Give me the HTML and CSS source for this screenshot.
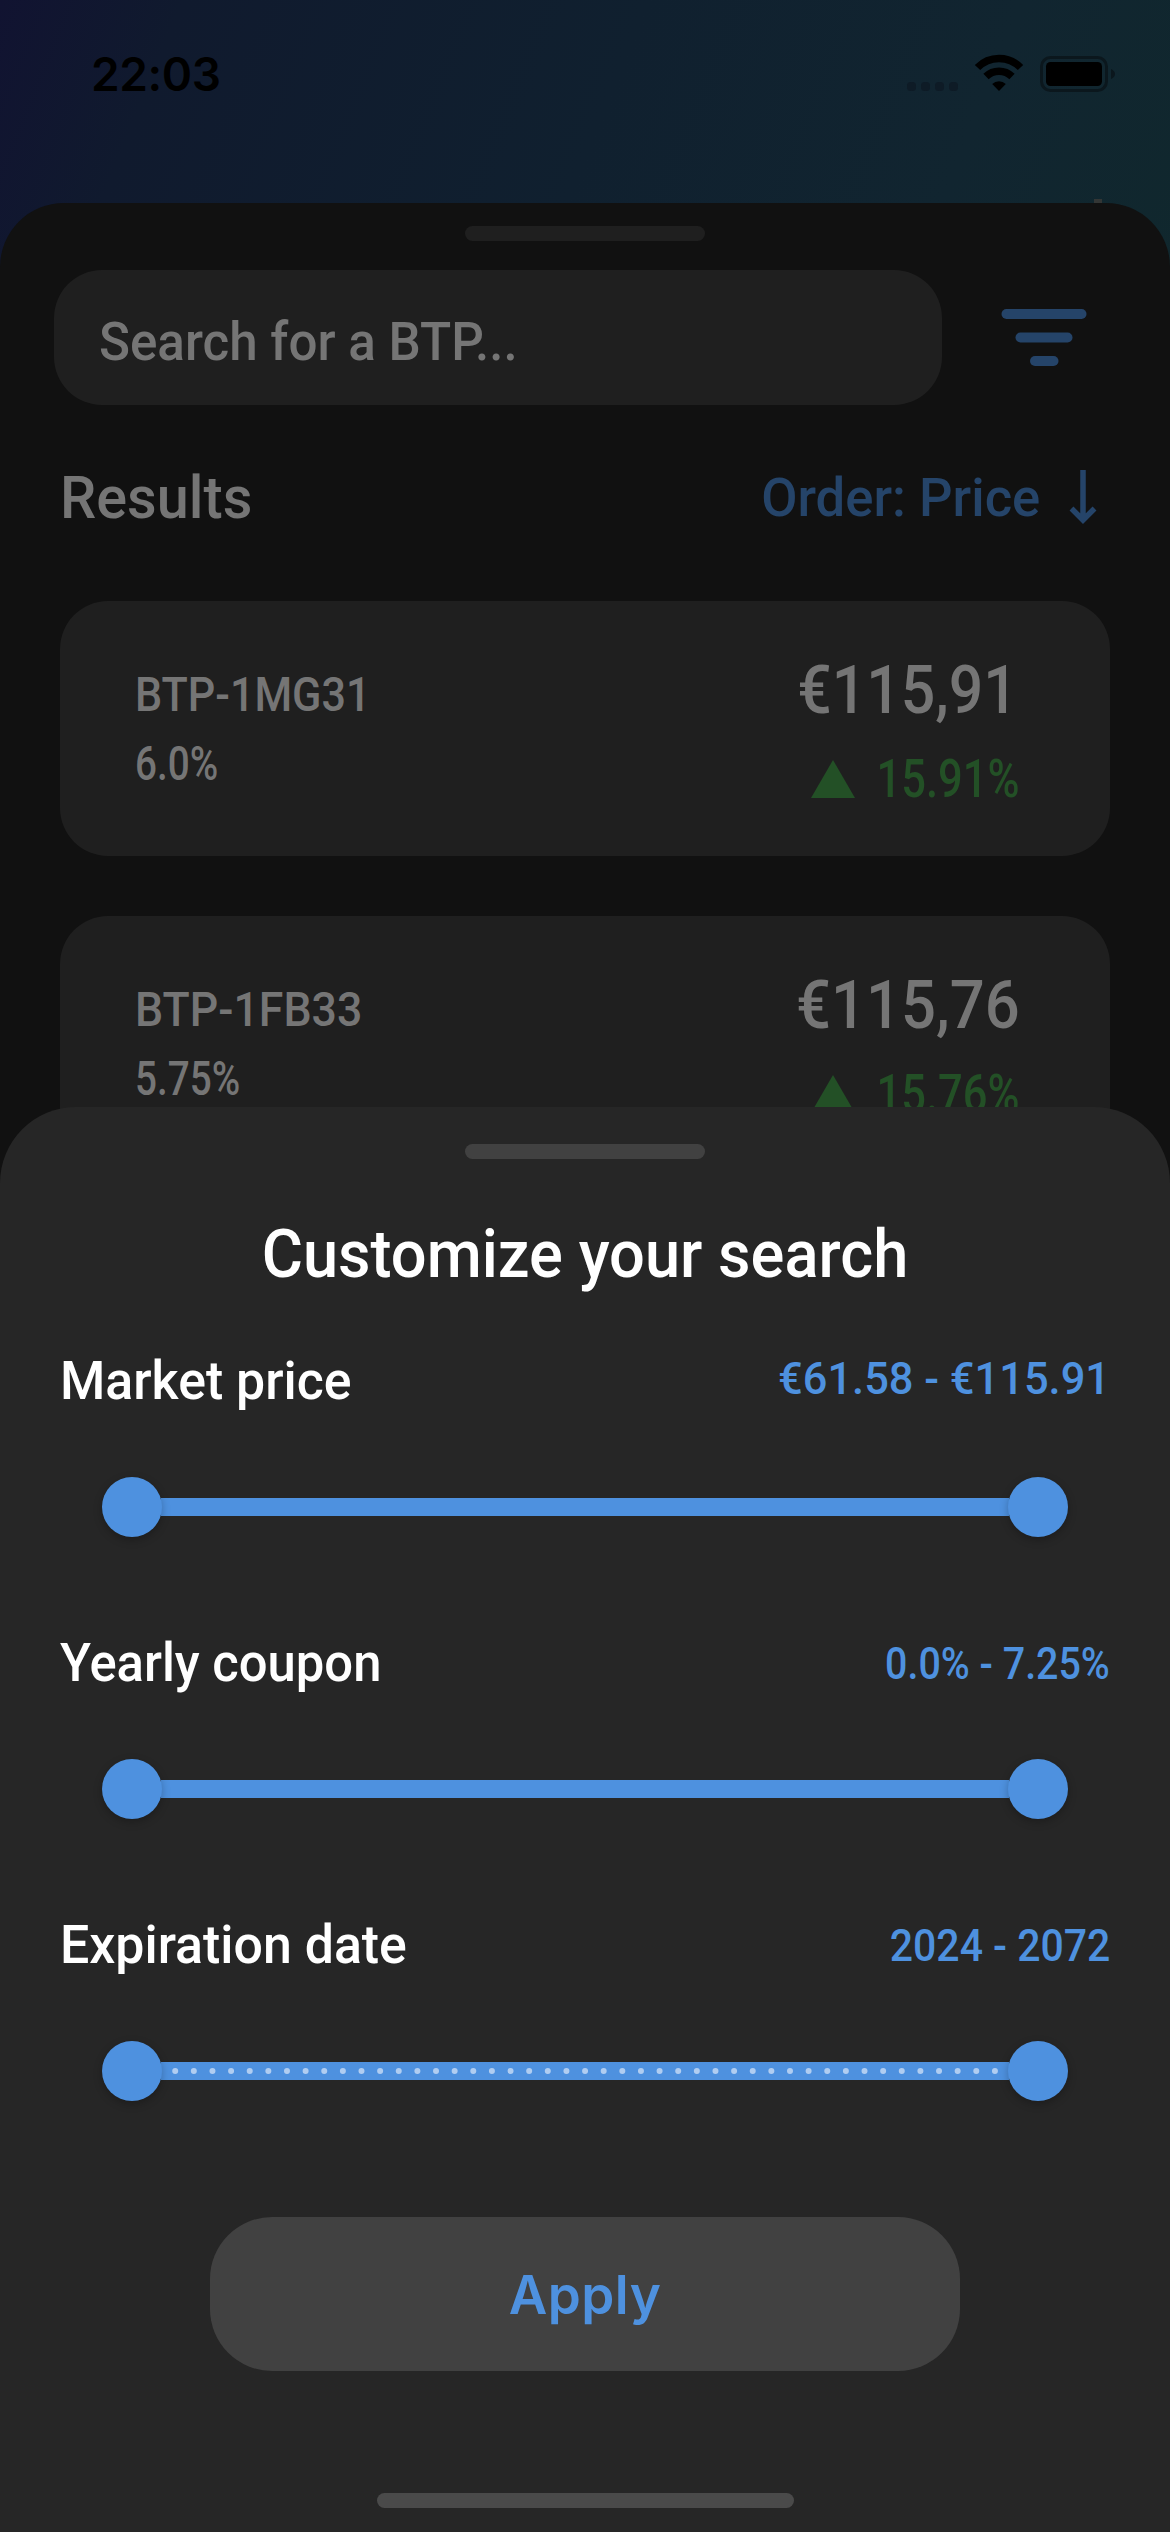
FILE: index.html
```html
<!DOCTYPE html>
<html lang="en">
<head>
<meta charset="utf-8">
<title>BTP search</title>
<link rel="stylesheet" href="styles.css">
</head>
<body>
<div class="screen">
  <main class="page">
    <header class="status">
      <span class="time">22:03</span>
      <svg class="status-icons" width="216" height="50" viewBox="0 0 216 50">
        <g fill="#0e1b26">
          <rect x="2" y="30" width="9" height="9" rx="3.5"/><rect x="16" y="30" width="9" height="9" rx="3.5"/>
          <rect x="30" y="30" width="9" height="9" rx="3.5"/><rect x="44" y="30" width="9" height="9" rx="3.5"/>
        </g>
        <g fill="none" stroke="#000" stroke-width="7.5">
          <path d="M72.500 15.500A30 30 0 0 1 115.500 15.500"/>
          <path d="M81 24.500A18.500 18.500 0 0 1 107 24.500"/>
        </g>
        <path d="M94 39L87.200 32A10 10 0 0 1 100.800 32Z"/>
        <rect x="136.500" y="5.500" width="65" height="33" rx="9" fill="none" stroke="#0b171d" stroke-width="3"/>
        <rect x="141" y="10" width="56" height="24" rx="4.500"/>
        <path d="M206 17Q210 19 210 22T206 27Z" fill="#0b171d"/>
      </svg>
    </header>
    <section class="results">
      <i class="tick"></i>
      <div class="handle"></div>
      <div class="search-row">
        <div class="search"><span class="fit fit-search">Search for a BTP...</span></div>
        <svg class="filter" width="86" height="58" viewBox="0 0 86 58" fill="#254469">
          <rect x="0.500" y="0" width="85" height="10" rx="5"/><rect x="14.500" y="23.500" width="57" height="10" rx="5"/><rect x="29" y="47" width="28.500" height="10" rx="5"/>
        </svg>
      </div>
      <div class="results-head">
        <span class="fit fit-label">Results</span>
        <span class="order"><span class="fit-right fit-order">Order: Price</span>
          <svg width="28" height="54" viewBox="0 0 28 54" fill="none" stroke="#254469" stroke-width="5.500"><path d="M14 0V50M2.500 38.500L14 50L25.500 38.500"/></svg>
        </span>
      </div>
      <article class="card">
        <div class="bond"><span class="fit fit-mg">BTP-1MG31</span><span class="fit fit-percent">6.0%</span></div>
        <div class="quote"><span class="price fit-right ends-one">€115,91</span>
          <span class="change"><svg width="44" height="38" viewBox="0 0 44 38"><path d="M22 0L44 38H0Z" fill="#235026"/></svg><span class="delta"><span class="fit-right fit-percent">15.91%</span></span></span></div>
      </article>
      <article class="card">
        <div class="bond"><span class="fit fit-fb">BTP-1FB33</span><span class="fit fit-percent">5.75%</span></div>
        <div class="quote"><span class="price fit-right">€115,76</span>
          <span class="change"><svg width="44" height="38" viewBox="0 0 44 38"><path d="M22 0L44 38H0Z" fill="#235026"/></svg><span class="delta"><span class="fit-right fit-percent">15.76%</span></span></span></div>
      </article>
    </section>
  </main>
  <section class="sheet">
    <div class="handle light"></div>
    <h1>Customize your search</h1>
    <div class="group">
      <div class="group-head"><span class="fit fit-label">Market price</span><span class="value high fit-right fit-prices">€61.58 - €115.91</span></div>
      <div class="slider"><i class="knob"></i><i class="track"></i><i class="knob"></i></div>
    </div>
    <div class="group">
      <div class="group-head"><span class="fit fit-yearly">Yearly coupon</span><span class="value fit-right fit-coupons">0.0% - 7.25%</span></div>
      <div class="slider"><i class="knob"></i><i class="track"></i><i class="knob"></i></div>
    </div>
    <div class="group">
      <div class="group-head"><span class="fit fit-label">Expiration date</span><span class="value fit-right fit-years">2024 - 2072</span></div>
      <div class="slider"><i class="knob"></i><svg class="track" width="846" height="18" viewBox="0 0 846 18"><path d="M13.200 9H833.500" stroke="#b0cdf1" stroke-width="6" stroke-linecap="round" stroke-dasharray="0 18.630"/></svg><i class="knob"></i></div>
    </div>
    <button class="apply">Apply</button>
    <div class="home"></div>
  </section>
</div>
</body>
</html>
```
FILE: styles.css
```css
* { box-sizing: border-box; }
body { margin: 0; background: #262626; }
.screen {
  position: relative;
  width: 1170px; height: 2532px;
  overflow: hidden;
  font-family: Roboto, "Liberation Sans", sans-serif;
  font-weight: 500;
}
/* Condensed lettering: each label is narrowed from its anchored edge */
.fit, .fit-right { display: inline-block; white-space: nowrap; transform: scaleX(var(--w, 1)); }
.fit { transform-origin: left center; }
.fit-right { transform-origin: right center; }
.fit-search { --w: .947; }
.fit-label { --w: .96; }
.fit-order { --w: .975; }
.fit-mg { --w: .897; }
.fit-fb { --w: .93; }
.fit-percent { --w: .806; }
.fit-yearly { --w: .94; }
.fit-prices { --w: .965; }
.fit-coupons { --w: .875; }
.fit-years { --w: .91; }
.page {
  height: 1300px;
  overflow: hidden;
  background: linear-gradient(112deg, #111331 0, #101a2e 170px, #10202f 600px, #112530 950px, #10282d 1240px);
}
.status {
  height: 203px;
  padding: 52px 54px 0 91px;
  display: flex; justify-content: space-between; align-items: flex-start;
}
.time { margin-top: -1px; font: 600 46px/46px Inter, sans-serif; color: #000; letter-spacing: -.4px; }
.status-icons { margin-right: -5px; }
.results {
  position: relative;
  height: 1100px;
  padding: 23px 60px 0;
  border-radius: 64px 64px 0 0;
  background: #111;
  color: #757575;
}
.tick { position: absolute; left: 1094px; top: -4px; width: 8px; height: 4px; background: #333635; }
.handle { width: 240px; height: 15px; margin: 0 auto; border-radius: 8px; background: #1f1f1f; }
.handle.light { background: #414141; }
.search-row { display: flex; align-items: center; gap: 59px; margin: 29px 0 0 -6px; }
.search {
  width: 888px; height: 135px; padding: 8px 0 0 45px;
  display: flex; align-items: center;
  border-radius: 48px; background: #1f1f1f;
  font-size: 54px;
}
.results-head {
  display: flex; justify-content: space-between; align-items: center;
  height: 80px; margin: 52px 0 64px;
  font-size: 60px;
}
.order { display: flex; align-items: center; gap: 29px; padding-right: 13px; color: #254469; font-size: 54px; }
.card {
  display: flex; justify-content: space-between; align-items: flex-start;
  height: 255px; margin-bottom: 60px; padding: 45px 90px 0 75px;
  border-radius: 48px; background: #1f1f1f;
}
.bond { display: flex; flex-direction: column; padding-top: 14px; font-size: 48px; line-height: 69px; }
.quote { display: flex; flex-direction: column; align-items: flex-end; }
.price { --w: .933; font-size: 66px; line-height: 90px; }
.price.ends-one { --w: .92; margin-right: 2px; }
.change { display: flex; align-items: center; font-size: 54px; line-height: 86px; color: #235026; }
.delta { display: flex; justify-content: flex-end; width: 165px; }
.sheet {
  position: absolute; left: 0; top: 1107px;
  width: 1170px; height: 1425px;
  padding: 37px 60px 0;
  border-radius: 76px 76px 0 0;
  background: #262626; color: #fff;
}
h1 { margin: 51px 0 40px; font-size: 66px; line-height: 90px; font-weight: 500; text-align: center; transform: scaleX(.957); }
.group { height: 282px; }
.group-head { display: flex; justify-content: space-between; align-items: center; height: 80px; font-size: 54px; }
.value { padding-top: 3px; font-size: 45px; color: #4e91df; }
.value.high { padding: 0 0 3px; }
.slider { display: flex; align-items: center; margin: 57px 42px 0; }
.knob { position: relative; width: 60px; height: 60px; border-radius: 50%; background: #4e91df; box-shadow: 0 3px 8px rgba(0,0,0,.25); }
.track { flex: 1; height: 18px; margin: 0 -1px; background: #4e91df; }
.apply {
  display: block; width: 750px; height: 154px; margin: 31px auto 0; padding: 2px 0 0;
  border: 0; border-radius: 62px; background: #414141;
  color: #4e91df; font: 600 53px/152px Inter, sans-serif; letter-spacing: .5px;
}
.home { width: 417px; height: 15px; margin: 122px auto 0; border-radius: 8px; background: #4a4a4a; }
```
